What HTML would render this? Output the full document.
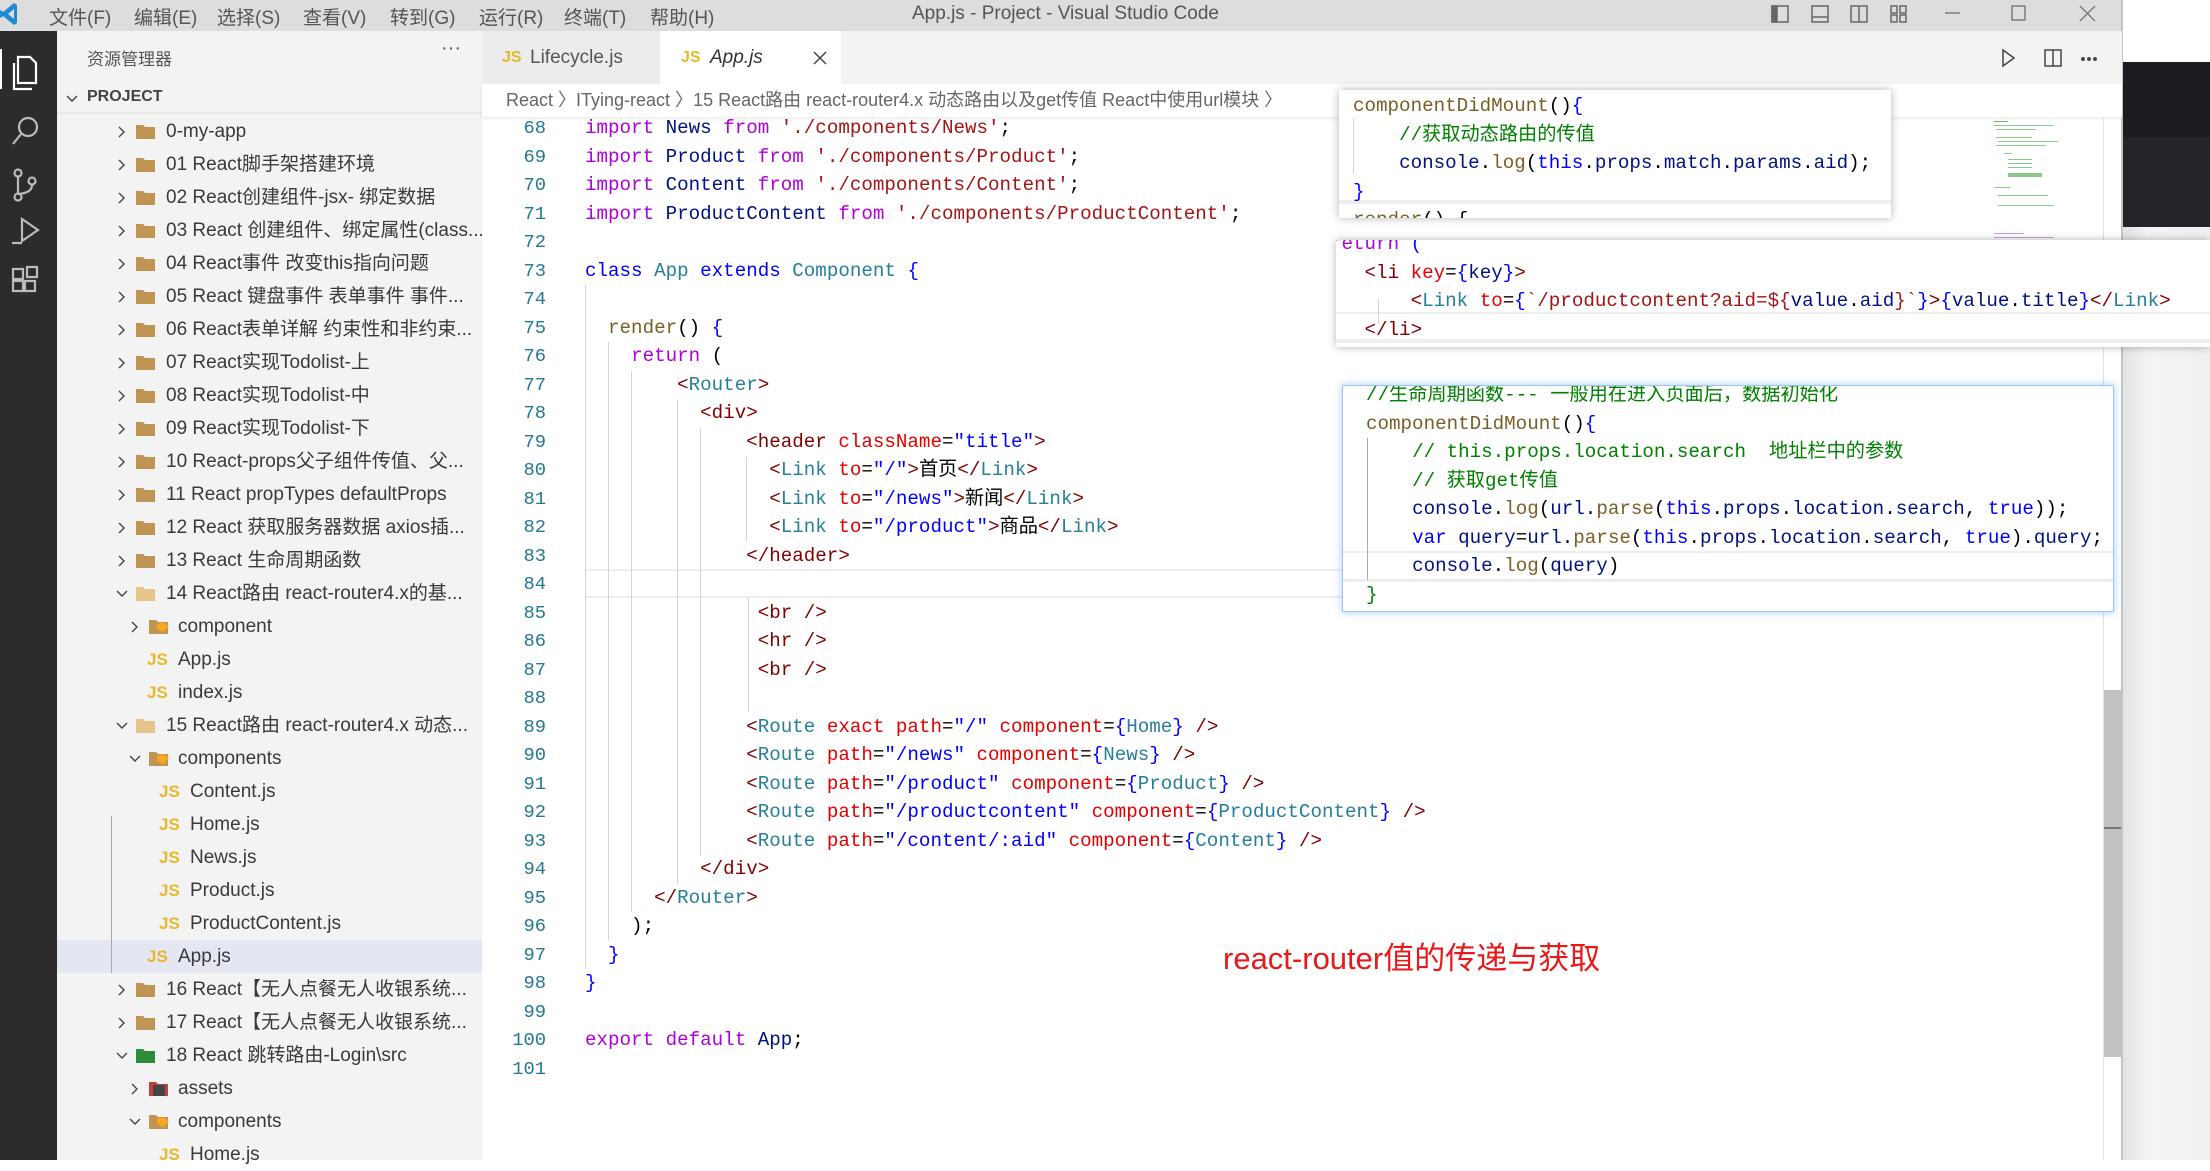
<!DOCTYPE html>
<html><head><meta charset="utf-8">
<style>
*{margin:0;padding:0;box-sizing:border-box}
body{width:2210px;height:1160px;overflow:hidden;background:#fff;position:relative;font-family:"Liberation Sans","Noto Sans CJK SC",sans-serif}
.abs{position:absolute}
#title{left:0;top:0;width:2122px;height:31px;background:#dddddd;font-size:19px;color:#555}
#title span{position:absolute;top:3px}
#act{left:0;top:31px;width:57px;height:1129px;background:#2c2c2c}
#side{left:57px;top:31px;width:425px;height:1129px;background:#f3f3f3;color:#3a3a3a}
.row{position:absolute;left:0;width:425px;height:33px;font-size:19px;line-height:33px;white-space:nowrap}
.row .tx{position:absolute;top:0}
.row svg{position:absolute}
.js{position:absolute;font-weight:bold;color:#e8b82a;font-size:17px;top:0px}
#tabs{left:482px;top:31px;width:1640px;height:53px;background:#f3f3f3}
#bc{left:482px;top:84px;width:1640px;height:33px;background:#fff;font-size:18px;color:#666;line-height:33px;white-space:nowrap;padding-left:24px;box-shadow:0 2px 3px rgba(0,0,0,.08)}
pre{font-family:"Liberation Mono","Noto Sans CJK SC",monospace;font-size:19.2px;line-height:28.5px;color:#000}
#ln{left:482px;top:114px;width:64px;text-align:right;color:#237893;font-size:18.8px}
#code{left:585px;top:114px}
.k{color:#af00db}.v{color:#001080}.s{color:#a31515}.b{color:#0000ff}.t{color:#267f99}.g{color:#800000}.a{color:#e50000}.f{color:#795e26}.c{color:#008000}
.pop{position:absolute;background:#fff;box-shadow:0 0 8px rgba(0,0,0,.3);overflow:hidden}
.pop pre{position:absolute;left:0;top:0}
.guide{position:absolute;width:1px;background:#d3d3d3}
</style></head><body>

<div id="title" class="abs">
 <svg class="abs" style="left:0;top:2px" width="18" height="24" viewBox="0 0 18 24"><path d="M14 1 L17 3 V21 L14 23 L3 14 L1 16 L0 15 V9 L1 8 L3 10 Z M14 7 L8 12 L14 17 Z" fill="#1f8ad2"/></svg>
 <span style="left:49px">文件(F)</span><span style="left:134px">编辑(E)</span><span style="left:217px">选择(S)</span><span style="left:303px">查看(V)</span><span style="left:390px">转到(G)</span><span style="left:479px">运行(R)</span><span style="left:564px">终端(T)</span><span style="left:650px">帮助(H)</span>
 <span style="left:912px">App.js - Project - Visual Studio Code</span>
 <svg class="abs" style="left:1770px;top:4px" width="140" height="22" viewBox="0 0 140 22" fill="none" stroke="#666" stroke-width="1.5"><rect x="2" y="2" width="16" height="16"/><rect x="2" y="2" width="5" height="16" fill="#666"/><rect x="42" y="2" width="16" height="16"/><line x1="42" y1="13" x2="58" y2="13"/><rect x="81" y="2" width="16" height="16"/><line x1="89" y1="2" x2="89" y2="18"/><rect x="121" y="2" width="6" height="7"/><rect x="121" y="11" width="6" height="7"/><rect x="130" y="2" width="6" height="7"/><rect x="130" y="11" width="6" height="7"/></svg>
 <svg class="abs" style="left:1940px;top:4px" width="170" height="22" viewBox="0 0 170 22" fill="none" stroke="#666" stroke-width="1.2"><line x1="5" y1="9" x2="20" y2="9"/><rect x="72" y="2" width="13" height="14"/><path d="M140 2 L155 17 M155 2 L140 17"/></svg>
</div>
<div class="abs" style="left:2122px;top:0;width:88px;height:62px;background:#fff"></div>
<div class="abs" style="left:2122px;top:62px;width:88px;height:75px;background:#1b1c20"></div>
<div class="abs" style="left:2122px;top:137px;width:88px;height:90px;background:#23252b"></div>
<div class="abs" style="left:2122px;top:227px;width:88px;height:933px;background:linear-gradient(90deg,#e2e2e2,#f4f4f4 30%,#f0f0f0)"></div>
<div class="abs" style="left:2121px;top:0;width:2px;height:1160px;background:#c4c4c4"></div>

<div id="act" class="abs">
 <svg class="abs" style="left:8px;top:16px" width="40" height="260" viewBox="0 0 40 260" fill="none" stroke="#fff" stroke-width="2.2">
  <path d="M10 10 h12 l6 6 v20 h-18 z M6 16 v26 h18" />
  <circle cx="20" cy="80" r="9" stroke="#bbb"/><line x1="13" y1="87" x2="5" y2="97" stroke="#bbb"/>
  <circle cx="10" cy="126" r="3.5" stroke="#bbb"/><circle cx="10" cy="150" r="3.5" stroke="#bbb"/><circle cx="24" cy="134" r="3.5" stroke="#bbb"/><path d="M10 130 v16 M24 138 q0 8 -14 9" stroke="#bbb"/>
  <path d="M14 172 l16 11 l-16 11 z M4 196 h10" stroke="#bbb"/>
  <path d="M5 222 h10 v10 h-10 z M5 234 h10 v10 h-10 z M17 234 h10 v10 h-10 z M19 220 h10 v10 h-10 z" stroke="#bbb"/>
 </svg>
 <div class="abs" style="left:0;top:18px;width:2px;height:40px;background:#fff"></div>
</div>

<div id="side" class="abs">
 <div class="abs" style="left:30px;top:14px;font-size:17px;color:#555">资源管理器</div>
 <div class="abs" style="left:384px;top:6px;font-size:20px;color:#555">···</div>
 <svg class="abs" style="left:8px;top:62px" width="14" height="12" viewBox="0 0 14 12"><path d="M2 3 L7 8 L12 3" fill="none" stroke="#444" stroke-width="1.5"/></svg>
 <div class="abs" style="left:30px;top:57px;font-size:16px;font-weight:bold;color:#444">PROJECT</div>
 <div class="abs" style="left:0;top:81px;width:425px;height:3px;background:linear-gradient(#e4e4e4,#f3f3f3)"></div>
 <div class="abs" style="left:0;top:909px;width:425px;height:33px;background:#e4e6f1"></div>
 <div class="abs" style="left:54px;top:785px;width:1px;height:157px;background:#a8a8a8"></div>
 <div id="tree"></div>
</div>

<div id="tabs" class="abs">
 <div class="abs" style="left:0;top:0;width:178px;height:53px;background:#ececec;font-size:19px;line-height:53px;color:#555"><span style="position:absolute;left:20px;color:#e8b82a;font-weight:bold;font-size:16px">JS</span><span style="position:absolute;left:48px">Lifecycle.js</span></div>
 <div class="abs" style="left:178px;top:0;width:181px;height:53px;background:#fff;font-size:19px;line-height:53px;color:#333"><span style="position:absolute;left:21px;color:#e8b82a;font-weight:bold;font-size:16px">JS</span><span style="position:absolute;left:50px;font-style:italic">App.js</span>
 <svg class="abs" style="left:152px;top:19px" width="16" height="16" viewBox="0 0 16 16"><path d="M2 2 L14 14 M14 2 L2 14" stroke="#444" stroke-width="1.5"/></svg></div>
 <svg class="abs" style="left:1518px;top:16px" width="120" height="22" viewBox="0 0 120 22" fill="none" stroke="#444" stroke-width="1.5"><path d="M3 3 L14 11 L3 19 Z"/><rect x="45" y="3" width="16" height="16"/><line x1="53" y1="3" x2="53" y2="19"/><circle cx="83" cy="12" r="1.2" fill="#444"/><circle cx="89" cy="12" r="1.2" fill="#444"/><circle cx="95" cy="12" r="1.2" fill="#444"/></svg>
</div>
<div id="bc" class="abs">React 〉ITying-react 〉15 React路由 react-router4.x 动态路由以及get传值 React中使用url模块 〉</div>

<div class="abs" style="left:585px;top:569px;width:1518px;height:29px;border-top:2px solid #eeeeee;border-bottom:2px solid #eeeeee"></div>
<div class="guide" style="left:585px;top:285px;height:684px"></div>
<div class="guide" style="left:608px;top:342px;height:598px"></div>
<div class="guide" style="left:631px;top:371px;height:541px"></div>
<div class="guide" style="left:677px;top:400px;height:484px"></div>
<div class="guide" style="left:700px;top:428px;height:428px"></div>
<div class="guide" style="left:746px;top:457px;height:85px"></div>
<div class="guide" style="left:748px;top:598px;height:114px"></div>

<pre id="ln" class="abs">68
69
70
71
72
73
74
75
76
77
78
79
80
81
82
83
84
85
86
87
88
89
90
91
92
93
94
95
96
97
98
99
100
101</pre>
<pre id="code" class="abs"><span class="k">import</span> <span class="v">News</span> <span class="k">from</span> <span class="s">'./components/News'</span>;
<span class="k">import</span> <span class="v">Product</span> <span class="k">from</span> <span class="s">'./components/Product'</span>;
<span class="k">import</span> <span class="v">Content</span> <span class="k">from</span> <span class="s">'./components/Content'</span>;
<span class="k">import</span> <span class="v">ProductContent</span> <span class="k">from</span> <span class="s">'./components/ProductContent'</span>;

<span class="b">class</span> <span class="t">App</span> <span class="b">extends</span> <span class="t">Component</span> <span class="b">{</span>

  <span class="f">render</span>() <span class="b">{</span>
    <span class="k">return</span> (
        <span class="g">&lt;</span><span class="t">Router</span><span class="g">&gt;</span>
          <span class="g">&lt;div&gt;</span>
              <span class="g">&lt;header</span> <span class="a">className</span>=<span class="b">"title"</span><span class="g">&gt;</span>
                <span class="g">&lt;</span><span class="t">Link</span> <span class="a">to</span>=<span class="b">"/"</span><span class="g">&gt;</span>首页<span class="g">&lt;/</span><span class="t">Link</span><span class="g">&gt;</span>
                <span class="g">&lt;</span><span class="t">Link</span> <span class="a">to</span>=<span class="b">"/news"</span><span class="g">&gt;</span>新闻<span class="g">&lt;/</span><span class="t">Link</span><span class="g">&gt;</span>
                <span class="g">&lt;</span><span class="t">Link</span> <span class="a">to</span>=<span class="b">"/product"</span><span class="g">&gt;</span>商品<span class="g">&lt;/</span><span class="t">Link</span><span class="g">&gt;</span>
              <span class="g">&lt;/header&gt;</span>

               <span class="g">&lt;br /&gt;</span>
               <span class="g">&lt;hr /&gt;</span>
               <span class="g">&lt;br /&gt;</span>

              <span class="g">&lt;</span><span class="t">Route</span> <span class="a">exact</span> <span class="a">path</span>=<span class="b">"/"</span> <span class="a">component</span>=<span class="b">{</span><span class="t">Home</span><span class="b">}</span> <span class="g">/&gt;</span>
              <span class="g">&lt;</span><span class="t">Route</span> <span class="a">path</span>=<span class="b">"/news"</span> <span class="a">component</span>=<span class="b">{</span><span class="t">News</span><span class="b">}</span> <span class="g">/&gt;</span>
              <span class="g">&lt;</span><span class="t">Route</span> <span class="a">path</span>=<span class="b">"/product"</span> <span class="a">component</span>=<span class="b">{</span><span class="t">Product</span><span class="b">}</span> <span class="g">/&gt;</span>
              <span class="g">&lt;</span><span class="t">Route</span> <span class="a">path</span>=<span class="b">"/productcontent"</span> <span class="a">component</span>=<span class="b">{</span><span class="t">ProductContent</span><span class="b">}</span> <span class="g">/&gt;</span>
              <span class="g">&lt;</span><span class="t">Route</span> <span class="a">path</span>=<span class="b">"/content/:aid"</span> <span class="a">component</span>=<span class="b">{</span><span class="t">Content</span><span class="b">}</span> <span class="g">/&gt;</span>
          <span class="g">&lt;/div&gt;</span>
      <span class="g">&lt;/</span><span class="t">Router</span><span class="g">&gt;</span>
    );
  <span class="b">}</span>
<span class="b">}</span>

<span class="k">export</span> <span class="k">default</span> <span class="v">App</span>;
</pre>

<div class="abs" style="left:1988px;top:117px;width:115px;height:140px">
 <div class="abs" style="left:6px;top:4px;width:14px;height:1px;background:#6cb46c"></div>
 <div class="abs" style="left:6px;top:8px;width:60px;height:1px;background:#8cc88c"></div>
 <div class="abs" style="left:8px;top:12px;width:40px;height:1px;background:#8cc88c"></div>
 <div class="abs" style="left:8px;top:20px;width:36px;height:1px;background:#8cc88c"></div>
 <div class="abs" style="left:10px;top:24px;width:60px;height:1px;background:#8cc88c"></div>
 <div class="abs" style="left:8px;top:28px;width:50px;height:1px;background:#8cc88c"></div>
 <div class="abs" style="left:16px;top:36px;width:8px;height:1px;background:#8cc88c"></div>
 <div class="abs" style="left:20px;top:42px;width:24px;height:1px;background:#8cc88c"></div>
 <div class="abs" style="left:20px;top:46px;width:24px;height:1px;background:#8cc88c"></div>
 <div class="abs" style="left:20px;top:50px;width:24px;height:1px;background:#8cc88c"></div>
 <div class="abs" style="left:20px;top:56px;width:34px;height:4px;background:#8cc88c"></div>
 <div class="abs" style="left:6px;top:70px;width:16px;height:1px;background:#8cc88c"></div>
 <div class="abs" style="left:10px;top:78px;width:50px;height:1px;background:#8cc88c"></div>
 <div class="abs" style="left:10px;top:88px;width:56px;height:1px;background:#8cc88c"></div>
 <div class="abs" style="left:6px;top:116px;width:30px;height:1px;background:#c8a0d8"></div>
 <div class="abs" style="left:6px;top:120px;width:60px;height:1px;background:#c8a0d8"></div>
</div>
<div class="abs" style="left:2103px;top:117px;width:1px;height:1043px;background:#e2e2e2"></div>
<div class="abs" style="left:2104px;top:690px;width:17px;height:367px;background:#c1c1c1"></div>
<div class="abs" style="left:2104px;top:827px;width:17px;height:2px;background:#777"></div>

<div class="pop" style="left:1339px;top:90px;width:552px;height:128px">
 <div class="abs" style="left:0;top:110px;width:552px;height:4px;background:#eee"></div>
 <div class="guide" style="left:14px;top:28px;height:56px"></div>
 <pre style="left:14px;top:2px"><span class="f">componentDidMount</span>()<span class="b">{</span>
    <span class="c">//获取动态路由的传值</span>
    <span class="v">console</span>.<span class="f">log</span>(<span class="b">this</span>.<span class="v">props</span>.<span class="v">match</span>.<span class="v">params</span>.<span class="v">aid</span>);
<span class="b">}</span>
<span class="f">render</span>() {</pre>
</div>
<div class="pop" style="left:1336px;top:240px;width:874px;height:107px">
 <div class="abs" style="left:0;top:72px;width:874px;height:2px;background:#eee"></div>
 <div class="abs" style="left:0;top:99px;width:874px;height:4px;background:#eee"></div>
 <div class="guide" style="left:42px;top:58px;height:26px"></div>
 <pre style="left:-6px;top:-10px"><span class="k">return</span> <span class="b">(</span>
   <span class="g">&lt;li</span> <span class="a">key</span>=<span class="b">{</span><span class="v">key</span><span class="b">}</span><span class="g">&gt;</span>
       <span class="g">&lt;</span><span class="t">Link</span> <span class="a">to</span>=<span class="b">{</span><span class="s">`/productcontent?aid=${</span><span class="v">value</span>.<span class="v">aid</span><span class="s">}`</span><span class="b">}</span><span class="g">&gt;</span><span class="b">{</span><span class="v">value</span>.<span class="v">title</span><span class="b">}</span><span class="g">&lt;/</span><span class="t">Link</span><span class="g">&gt;</span>
   <span class="g">&lt;/li&gt;</span></pre>
</div>
<div class="pop" style="left:1342px;top:385px;width:772px;height:227px;border:1px solid #9cc6f5;box-shadow:0 0 8px rgba(60,140,240,.45)">
 <div class="abs" style="left:0;top:165px;width:772px;height:2px;background:#eee"></div>
 <div class="abs" style="left:0;top:193px;width:772px;height:3px;background:#eee"></div>
 <div class="guide" style="left:24px;top:52px;height:142px;background:#aaa"></div>
 <pre style="left:23px;top:-5px"><span class="c">//生命周期函数--- 一般用在进入页面后，数据初始化</span>
<span class="f">componentDidMount</span>()<span class="b">{</span>
    <span class="c">// this.props.location.search  地址栏中的参数</span>
    <span class="c">// 获取get传值</span>
    <span class="v">console</span>.<span class="f">log</span>(<span class="v">url</span>.<span class="f">parse</span>(<span class="b">this</span>.<span class="v">props</span>.<span class="v">location</span>.<span class="v">search</span>, <span class="b">true</span>));
    <span class="b">var</span> <span class="v">query</span>=<span class="v">url</span>.<span class="f">parse</span>(<span class="b">this</span>.<span class="v">props</span>.<span class="v">location</span>.<span class="v">search</span>, <span class="b">true</span>).<span class="v">query</span>;
    <span class="v">console</span>.<span class="f">log</span>(<span class="v">query</span>)
<span class="c">}</span></pre>
</div>

<div class="abs" style="left:1223px;top:933px;font-size:31px;color:#e8191a;white-space:nowrap">react-router值的传递与获取</div>

<script>
var rows=[
[1,'f','0-my-app'],[1,'f','01 React脚手架搭建环境'],[1,'f','02 React创建组件-jsx- 绑定数据'],[1,'f','03 React 创建组件、绑定属性(class...'],
[1,'f','04 React事件 改变this指向问题'],[1,'f','05 React 键盘事件 表单事件 事件...'],[1,'f','06 React表单详解 约束性和非约束...'],
[1,'f','07 React实现Todolist-上'],[1,'f','08 React实现Todolist-中'],[1,'f','09 React实现Todolist-下'],
[1,'f','10 React-props父子组件传值、父...'],[1,'f','11 React  propTypes  defaultProps'],[1,'f','12 React 获取服务器数据 axios插...'],
[1,'f','13 React 生命周期函数'],[1,'o','14 React路由 react-router4.x的基...'],[2,'c','component'],[2,'j','App.js'],[2,'j','index.js'],
[1,'o','15 React路由 react-router4.x 动态...'],[2,'co','components'],[3,'j','Content.js'],[3,'j','Home.js'],[3,'j','News.js'],
[3,'j','Product.js'],[3,'j','ProductContent.js'],[2,'j','App.js'],[1,'f','16 React【无人点餐无人收银系统...'],[1,'f','17 React【无人点餐无人收银系统...'],
[1,'g','18 React 跳转路由-Login\\src'],[2,'a','assets'],[2,'co','components'],[3,'j','Home.js']];
var h='';
rows.forEach(function(r,i){
 var top=84+i*33,L=r[0],t=r[1],s='<div class="row" style="top:'+top+'px">';
 var open=(t=='o'||t=='co'||t=='g');
 var cx=L==1?58:71, ix=L==1?78:91, tx=L==1?109:121;
 if(t!='j'){
  s+='<svg style="left:'+cx+'px;top:10px" width="14" height="14" viewBox="0 0 14 14"><path d="'+(open?'M2 4 L7 9 L12 4':'M4 2 L9 7 L4 12')+'" fill="none" stroke="#444" stroke-width="1.4"/></svg>';
  var col=t=='o'?'#e6c48a':(t=='g'?'#2e8b3a':(t=='a'?'#c04040':'#c09553'));
  s+='<svg style="left:'+ix+'px;top:7px" width="22" height="19" viewBox="0 0 22 19"><path d="M1 3 h7 l2 2 h10 v12 h-19 z" fill="'+col+'"/>'+
   (t=='c'||t=='co'?'<path d="M9 7 l6 -2 l6 4 l-6 6 l-6 -3 z" fill="#f5a623"/>':'')+
   (t=='a'?'<rect x="5" y="6" width="12" height="11" fill="#444"/>':'')+'</svg>';
 } else {
  var jx=L==2?90:102; tx=L==2?121:133;
  s+='<span class="js" style="left:'+jx+'px">JS</span>';
 }
 s+='<span class="tx" style="left:'+tx+'px">'+r[2]+'</span></div>';
 h+=s;
});
document.getElementById('tree').innerHTML=h;
</script>
</body></html>
